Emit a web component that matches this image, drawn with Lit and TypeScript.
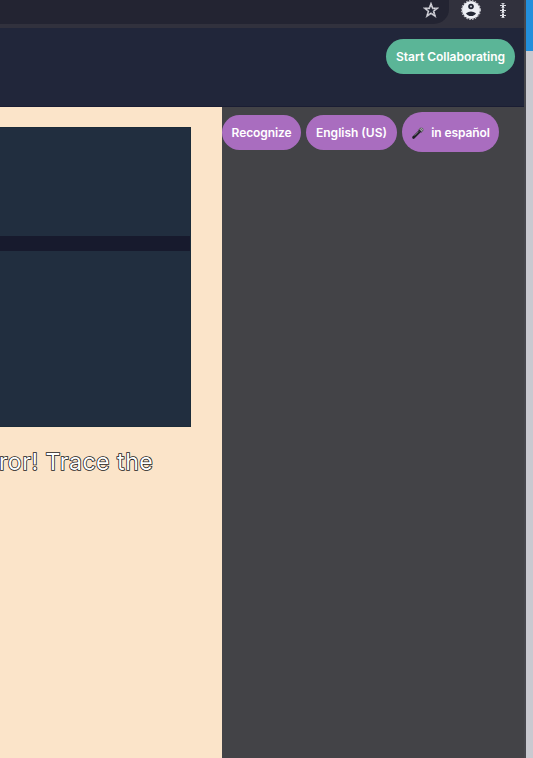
import { LitElement, html, css } from "lit";
import { customElement } from "lit/decorators.js";

@customElement("app-root")
export class AppRoot extends LitElement {
  static styles = css`
    :host {
      display: flex;
      width: 533px;
      height: 758px;
      overflow: hidden;
      font-family: Inter, "Liberation Sans", sans-serif;
    }
    * { box-sizing: border-box; }
    .window {
      width: 526px;
      flex: none;
      display: flex;
      flex-direction: column;
      background: #21263a;
      border-right: 2px solid #47474d;
    }
    .toolbar {
      height: 28px;
      flex: none;
      display: flex;
      background: #31313d;
    }
    .address {
      width: 449px;
      height: 24px;
      background: #232432;
      border-bottom-right-radius: 15px;
      display: flex;
      justify-content: flex-end;
      padding: 2px 10px 0 0;
    }
    .avatar { margin-left: 11px; }
    .menu { margin: 2px 0 0 16px; }
    svg { display: block; flex: none; }
    .header {
      height: 79px;
      flex: none;
      display: flex;
      justify-content: flex-end;
      padding: 11px 9px 0 0;
      border-bottom: 1px solid #1a1d33;
    }
    .btn {
      border: 0;
      margin: 0;
      padding: 0;
      height: 35px;
      border-radius: 20px;
      color: #fff;
      background: #a96dbf;
      font: 600 12px/1 Inter, "Liberation Sans", sans-serif;
      white-space: nowrap;
      display: flex;
      align-items: center;
      justify-content: center;
      flex: none;
    }
    .collab { width: 129px; background: #5bb597; }
    .body { flex: 1; display: flex; min-height: 0; }
    .main {
      width: 222px;
      flex: none;
      padding-top: 20px;
      background: #fbe4c9;
    }
    .board {
      width: 191px;
      height: 300px;
      background: #212e3f;
      border: solid #1b2b39;
      border-width: 1px 1px 1px 0;
      padding-top: 108px;
    }
    .bar { height: 15px; background: #171a2d; }
    .caption {
      margin: 20px 0 0 -1px;
      font: 400 23px/30px Inter, "Liberation Sans", sans-serif;
      letter-spacing: 0.56px;
      color: #fff;
      white-space: nowrap;
      -webkit-text-stroke: 1.6px #19191b;
      paint-order: stroke fill;
    }
    .side {
      flex: 1;
      display: flex;
      align-items: flex-start;
      gap: 5px;
      padding-top: 5px;
      background: #434347;
    }
    .recognize { width: 79px; margin-top: 3px; letter-spacing: -0.1px; }
    .english { width: 91px; margin-top: 3px; }
    .spanish { width: 97px; height: 40px; gap: 6px; letter-spacing: -0.1px; padding-top: 1px; }
    .desktop { flex: 1; background: #c9c9d0; }
    .blue { height: 51px; background: #238fdc; }
  `;

  render() {
    return html`
      <div class="window">
        <div class="toolbar">
          <div class="address">
            <svg width="16" height="16" viewBox="0 0 16 16">
              <path d="M8 1.8 9.7 6.3H14.2L10.6 9.2 12 14 8 11.2 4 14 5.4 9.2 1.8 6.3H6.3Z"
                fill="#202331" stroke="#b9b9c2" stroke-width="1.7" />
              <path d="M8 1.8 9.7 6.3H14.2L10.6 9.2 12 14 8 11.2 4 14 5.4 9.2 1.8 6.3H6.3Z"
                fill="none" stroke="#f0f0f4" stroke-width="1" stroke-dasharray="1 2" />
            </svg>
          </div>
          <svg class="avatar" width="22" height="22" viewBox="0 0 22 22">
            <circle cx="11" cy="10" r="9" fill="#eceef4" />
            <circle cx="11" cy="10" r="9.4" fill="none" stroke="#f4f5fa" stroke-dasharray="1.5 1.5" />
            <circle cx="11" cy="6.5" r="2.8" fill="#232735" />
            <circle cx="11" cy="6.5" r="1" fill="#d9dae2" />
            <path d="M6 13.2Q11 9.8 16 13.2Q14.5 16 11 16Q7.5 16 6 13.2Z" fill="#232735" />
          </svg>
          <svg class="menu" width="10" height="18" viewBox="0 0 10 18">
            <path d="M5 1v15" stroke="#eeeef3" stroke-width="2" />
            <path d="M2 3.5h6M2 8.5h6M2 13.5h6" stroke="#d6d7df" />
            <path d="M3.5 1.5h3M3.5 5.5h3M3.5 10.5h3M3.5 15.5h3" stroke="#c9cad2" />
            <path d="M4.5 2.5h1M4.5 6.5h1M4.5 11.5h1" stroke="#51525f" />
          </svg>
        </div>
        <header class="header">
          <button class="btn collab">Start Collaborating</button>
        </header>
        <div class="body">
          <main class="main">
            <div class="board"><div class="bar"></div></div>
            <div class="caption">ror! Trace the</div>
          </main>
          <aside class="side">
            <button class="btn recognize">Recognize</button>
            <button class="btn english">English (US)</button>
            <button class="btn spanish">
              <svg width="14" height="14" viewBox="0 0 14 14">
                <path d="M2.5 11.5 8.5 5.5" stroke="#202027" stroke-width="2.6" stroke-linecap="round" />
                <path d="M3.6 9.6 7.6 5.6" stroke="#8d8c91" stroke-width="0.8" />
                <circle cx="10.2" cy="3.8" r="2.4" fill="#66666d" />
                <path d="M8.8 2.8 11.2 5.2M10 2l2 2" stroke="#b4b4b8" stroke-width=".7" />
                <path d="m7.6 3.8 2.6 2.6" stroke="#18181d" stroke-width="1" />
              </svg>
              <span>in español</span>
            </button>
          </aside>
        </div>
      </div>
      <div class="desktop"><div class="blue"></div></div>
    `;
  }
}
